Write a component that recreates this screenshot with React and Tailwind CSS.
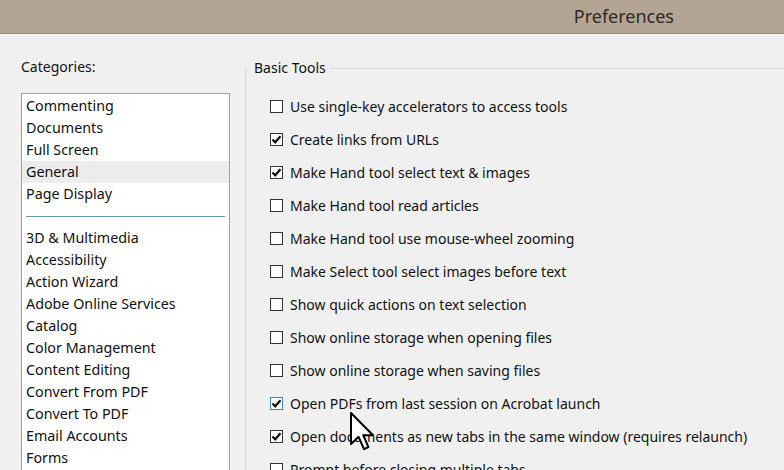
import React from "react";

const topCategories = ["Commenting", "Documents", "Full Screen", "General", "Page Display"];
const moreCategories = [
  "3D & Multimedia",
  "Accessibility",
  "Action Wizard",
  "Adobe Online Services",
  "Catalog",
  "Color Management",
  "Content Editing",
  "Convert From PDF",
  "Convert To PDF",
  "Email Accounts",
  "Forms",
];

const options = [
  { label: "Use single-key accelerators to access tools", checked: false },
  { label: "Create links from URLs", checked: true },
  { label: "Make Hand tool select text & images", checked: true },
  { label: "Make Hand tool read articles", checked: false },
  { label: "Make Hand tool use mouse-wheel zooming", checked: false },
  { label: "Make Select tool select images before text", checked: false },
  { label: "Show quick actions on text selection", checked: false },
  { label: "Show online storage when opening files", checked: false },
  { label: "Show online storage when saving files", checked: false },
  { label: "Open PDFs from last session on Acrobat launch", checked: true, hover: true },
  { label: "Open documents as new tabs in the same window (requires relaunch)", checked: true },
  { label: "Prompt before closing multiple tabs", checked: false },
];

function Checkbox({ checked, hover }) {
  return (
    <span
      className={`flex h-[13px] w-[13px] shrink-0 items-center justify-center border bg-white ${
        hover ? "border-[#3b84c4]" : "border-[#333333]"
      }`}
    >
      {checked && (
        <svg width="11" height="11" viewBox="0 0 11 11">
          <path d="M1.5 5.5 L4.2 8.3 L9.5 2.2" fill="none" stroke="#111" strokeWidth="2.2" />
        </svg>
      )}
    </span>
  );
}

function Cursor() {
  return (
    <svg
      className="absolute left-[350px] top-[412px]"
      width="24"
      height="40"
      viewBox="0 0 12 20"
    >
      <path
        d="M0.5 0.5 L0.5 16 L4.3 12.4 L7 18.6 L9.2 17.6 L6.6 11.6 L11.5 11.6 Z"
        fill="#fff"
        stroke="#000"
        strokeWidth="1"
        strokeLinejoin="round"
      />
    </svg>
  );
}

export default function App() {
  return (
    <div
      className="relative h-[470px] w-[784px] overflow-hidden bg-[#f0f0f0] text-[14px] text-[#111]"
      style={{ fontFamily: '"Noto Sans", "Open Sans", sans-serif' }}
    >
      {/* Title bar */}
      <div className="flex h-[34px] items-center justify-end border-b border-[#9a8b7f] bg-[#b4a494] pr-[110px]">
        <span className="text-[18px] text-[#2e2a26]">Preferences</span>
      </div>

      <div className="flex">
        {/* Categories */}
        <div className="w-[230px] shrink-0 pl-[21px]">
          <div className="mt-[22px] leading-[22px]">Categories:</div>
          <div className="mt-[15px] h-[400px] border border-[#a0a0a0] bg-white pt-[1px] text-[14.3px]">
            {topCategories.map((c) => (
              <div
                key={c}
                className={`h-[22px] pl-[4px] leading-[22px] ${c === "General" ? "bg-[#ececec]" : ""}`}
              >
                {c}
              </div>
            ))}
            <div className="mx-[4px] mb-[10px] mt-[11px] border-t border-[#5b9cb3]" />
            {moreCategories.map((c) => (
              <div key={c} className="h-[22px] pl-[4px] leading-[22px]">
                {c}
              </div>
            ))}
          </div>
        </div>

        {/* Basic Tools */}
        <fieldset className="ml-[15px] mt-[23px] h-[460px] flex-1 border border-r-0 border-[#dcdcdc] pl-[24px] pt-[11px]">
          <legend className="-ml-[20px] px-[4px] leading-[22px]">Basic Tools</legend>
          {options.map((o) => (
            <div key={o.label} className="flex h-[33px] items-center gap-[7px] whitespace-nowrap">
              <Checkbox checked={o.checked} hover={o.hover} />
              <span>{o.label}</span>
            </div>
          ))}
        </fieldset>
      </div>

      <Cursor />
    </div>
  );
}
